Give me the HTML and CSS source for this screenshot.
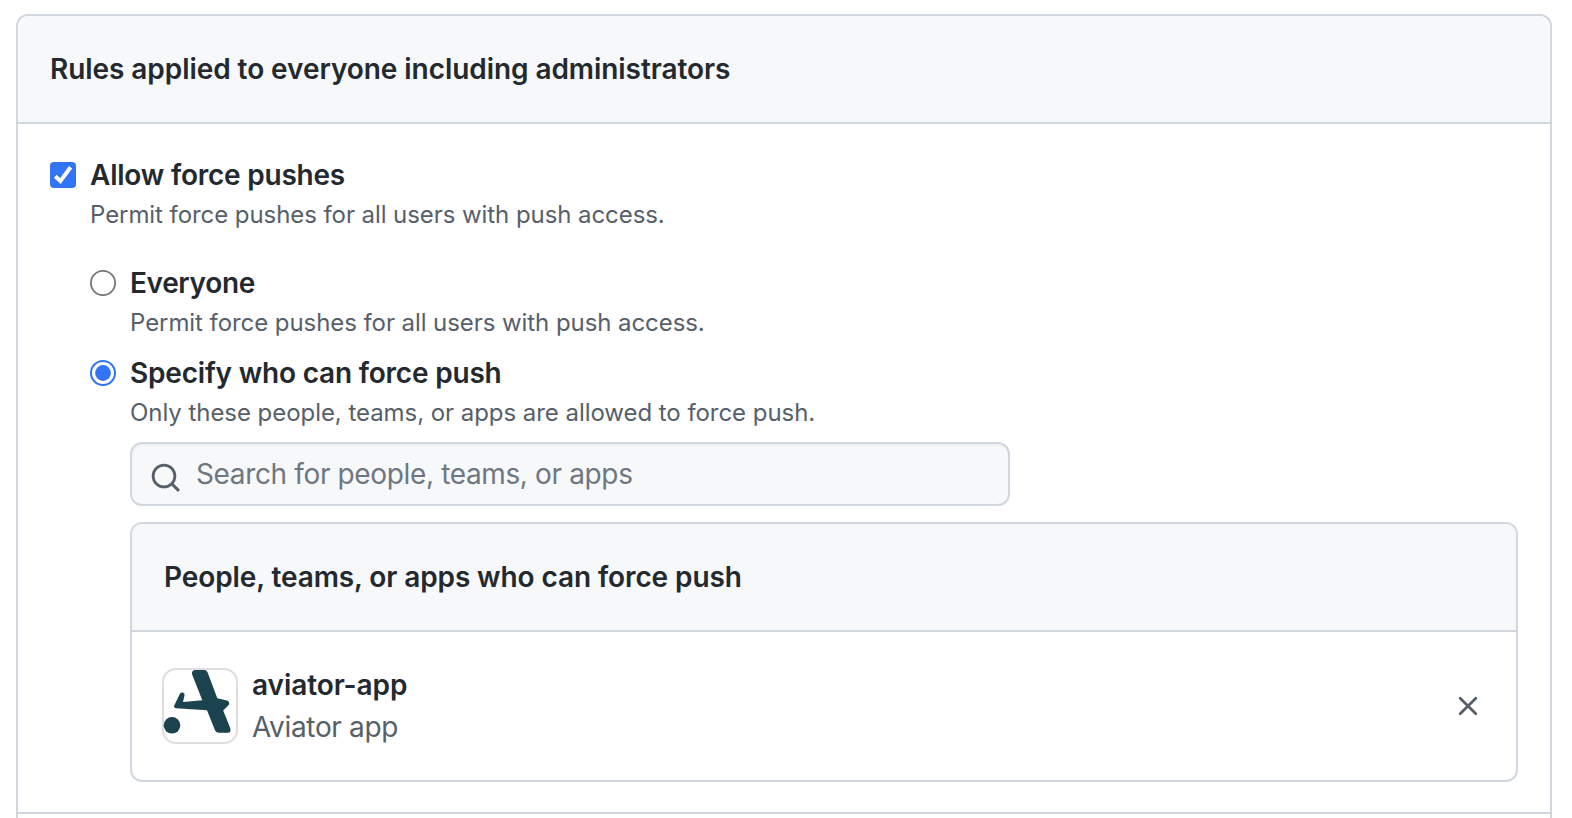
FILE: index.html
```html
<!DOCTYPE html>
<html lang="en">
<head>
<meta charset="utf-8">
<title>Branch protection rules</title>
<link rel="stylesheet" href="styles.css">
</head>
<body>
<section class="panel outer">
  <header class="panel-header"><h2 class="title t-rules">Rules applied to everyone including administrators</h2></header>
  <div class="panel-body">
    <div class="option">
      <svg class="control" viewBox="0 0 26 26"><rect width="26" height="26" rx="4" fill="#3174f6"/><path d="M5.3 14.2 10.4 19.1 20.6 5.3" fill="none" stroke="#fff" stroke-width="4"/></svg>
      <div class="option-text">
        <div class="title t-allow">Allow force pushes</div>
        <p class="note">Permit force pushes for all users with push access.</p>
        <div class="choices">
          <div class="option">
            <svg class="control" viewBox="0 0 26 26"><circle cx="13" cy="13" r="12.1" fill="#fff" stroke="#767676" stroke-width="1.8"/></svg>
            <div class="option-text">
              <div class="title t-everyone">Everyone</div>
              <p class="note">Permit force pushes for all users with push access.</p>
            </div>
          </div>
          <div class="option">
            <svg class="control" viewBox="0 0 26 26"><circle cx="13" cy="13" r="12" fill="#fff" stroke="#3174f6" stroke-width="2"/><circle cx="13" cy="13" r="7.9" fill="#3174f6"/></svg>
            <div class="option-text">
              <div class="title t-specify">Specify who can force push</div>
              <p class="note t-only">Only these people, teams, or apps are allowed to force push.</p>
              <div class="search">
                <svg class="search-icon" viewBox="0 0 30 30"><circle cx="13" cy="13" r="10.9" fill="none" stroke="#57606a" stroke-width="2.8"/><path d="M20.8 20.8 27.9 27.9" stroke="#57606a" stroke-width="3"/></svg>
                <span class="placeholder">Search for people, teams, or apps</span>
              </div>
              <section class="panel inner">
                <header class="panel-header"><h3 class="title t-people">People, teams, or apps who can force push</h3></header>
                <div class="app-row">
                  <svg class="avatar" viewBox="0 0 76 76"><rect x="1" y="1" width="74" height="74" rx="13" fill="#fff" stroke="#dedede" stroke-width="2"/><g fill="#1b424f"><circle cx="10" cy="57.3" r="8.3"/><path d="M33 2H42Q44.6 2 45.6 4.4L55.3 30.2L65 32.5Q68.5 34 66.5 37.2L61.2 42.5L68.2 60Q69.5 64.7 66 64.7H56.5Q54 64.7 53 62.3L45 42.3L14 40.2Q11 39.6 12.6 36.7L17.8 26Q18.8 24 21.2 24.7Q23 25.4 22.5 27.5L21 34.1L40.3 32.3L30.3 7Q28.8 2.8 33 2Z"/></g></svg>
                  <div class="app-text">
                    <div class="title t-app">aviator-app</div>
                    <div class="app-name">Aviator app</div>
                  </div>
                  <svg class="remove" viewBox="0 0 20 20"><path d="M2.2 2.2 17.8 17.8M17.8 2.2 2.2 17.8" stroke="#57606a" stroke-width="2.8" stroke-linecap="round"/></svg>
                </div>
              </section>
            </div>
          </div>
        </div>
      </div>
    </div>
  </div>
</section>
</body>
</html>
```
FILE: styles.css
```css
* { box-sizing: border-box; }
body {
  margin: 0;
  padding: 14px 20px 0 16px;
  background: #fff;
  color: #24292f;
  font: 400 28px/42px Inter, "Liberation Sans", sans-serif;
  white-space: nowrap;
}
h2, h3, p { margin: 0; }
svg { display: block; flex: none; }
.panel {
  border: 2px solid #d0d7de;
  border-radius: 12px;
}
.outer {
  height: 804px;
  border-bottom: 0;
  border-radius: 12px 12px 0 0;
}
.panel-header {
  padding: 32px;
  height: 108px;
  background: #f6f8fa;
  border-bottom: 2px solid #d0d7de;
  border-radius: 10px 10px 0 0;
}
.panel-body {
  padding: 30px 32px;
  height: 690px;
  border-bottom: 2px solid #d0d7de;
}
.title { font-size: 28px; font-weight: 600; line-height: 42px; }
.t-rules { letter-spacing: -0.065px; }
.t-allow { letter-spacing: -0.22px; }
.t-everyone { letter-spacing: -0.35px; }
.t-specify { letter-spacing: -0.2px; }
.t-people { letter-spacing: -0.1px; }
.t-app { letter-spacing: -0.08px; }
.note {
  height: 36px;
  padding-top: 1px;
  font-size: 24px;
  line-height: 36px;
  letter-spacing: -0.07px;
  color: #57606a;
}
.t-only { letter-spacing: -0.05px; }
.option { display: flex; gap: 14px; }
.control { width: 26px; height: 26px; margin-top: 8px; }
.option-text { flex: 1; }
.choices { display: flex; flex-direction: column; gap: 12px; padding-top: 30px; }
.search {
  display: flex;
  align-items: center;
  width: 880px;
  height: 64px;
  margin: 12px 0 16px;
  padding-left: 19px;
  background: #f6f8fa;
  border: 2px solid #d0d7de;
  border-radius: 12px;
  box-shadow: inset 0 2px 0 rgba(208, 215, 222, 0.2);
}
.search-icon { width: 30px; height: 30px; margin: 8px 15px 0 0; }
.placeholder { color: #6e7781; letter-spacing: -0.36px; }
.inner { height: 260px; }
.app-row { display: flex; align-items: center; height: 148px; padding: 0 38px 0 30px; }
.avatar { width: 76px; height: 76px; }
.app-text { flex: 1; padding-left: 14px; }
.app-name { color: #57606a; letter-spacing: -0.33px; }
.remove { width: 20px; height: 20px; }
```
